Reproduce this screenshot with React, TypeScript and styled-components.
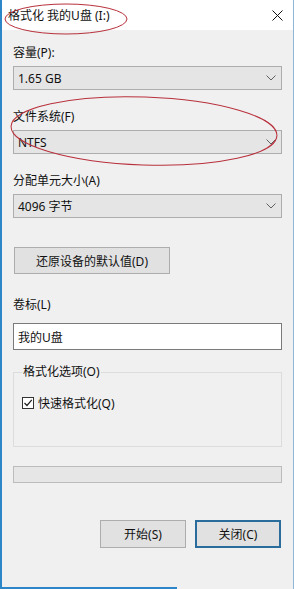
import React from 'react';
import styled, {createGlobalStyle} from 'styled-components';

const GlobalStyle = createGlobalStyle`
  html, body {
    margin: 0;
    padding: 0;
    background: #f0f0f0;
  }
  * {
    box-sizing: border-box;
  }
`;

const FONT = `"Noto Sans", "Noto Sans CJK SC", sans-serif`;

const Window = styled.div`
  position: relative;
  width: 294px;
  height: 589px;
  background: #f0f0f0;
  border-left: 2px solid #2d86c8;
  border-right: 1px solid #8fb6d6;
  font-family: ${FONT};
  font-size: 12px;
  color: #111;
  overflow: hidden;

  &::after {
    content: '';
    position: absolute;
    left: 0;
    bottom: 0;
    width: 175px;
    height: 2px;
    background: #2d86c8;
  }
`;

const TitleBar = styled.div`
  height: 30px;
  background: #fff;
  display: flex;
  align-items: center;
  justify-content: space-between;
  padding: 0 10px 0 6px;
  font-size: 12px;
`;

const Body = styled.div`
  padding: 15px 11px 0 11px;
  display: flex;
  flex-direction: column;
`;

const Field = styled.div<{$gap?: number; $inner?: number}>`
  display: flex;
  flex-direction: column;
  gap: ${({$inner}) => $inner ?? 5}px;
  margin-bottom: ${({$gap}) => $gap ?? 19}px;
`;

const Label = styled.div`
  height: 16px;
  line-height: 16px;
`;

const Combo = styled.div`
  height: 24px;
  background: #e5e5e5;
  border: 1px solid #adadad;
  display: flex;
  align-items: center;
  justify-content: space-between;
  padding: 0 5px 0 4px;
`;

const TextBox = styled.div`
  height: 27px;
  background: #fff;
  border: 1px solid #7a7a7a;
  display: flex;
  align-items: center;
  padding: 0 4px;
`;

const Button = styled.div<{$default?: boolean; $width: number; $height?: number}>`
  width: ${({$width}) => $width}px;
  height: ${({$height}) => $height ?? 28}px;
  background: #e1e1e1;
  border: ${({$default}) => ($default ? '2px solid #2a6c9c' : '1px solid #adadad')};
  display: flex;
  align-items: center;
  justify-content: center;
`;

const ResetRow = styled.div`
  padding-left: 1px;
  margin-bottom: 23px;
`;

const Group = styled.fieldset`
  margin: 0 0 19px 0;
  padding: 15px 8px 0 8px;
  height: 82px;
  border: 1px solid #dcdcdc;
  font-family: ${FONT};
  font-size: 12px;
  legend {
    padding: 0 1px;
    margin-left: 0;
    line-height: 14px;
  }
`;

const CheckRow = styled.label`
  display: flex;
  align-items: center;
  gap: 4px;
`;

const CheckBox = styled.span`
  width: 12px;
  height: 12px;
  border: 1px solid #333;
  background: #fff;
  display: flex;
  align-items: center;
  justify-content: center;
`;

const Progress = styled.div`
  height: 17px;
  background: #e6e6e6;
  border: 1px solid #bcbcbc;
  margin-bottom: 37px;
`;

const Footer = styled.div`
  display: flex;
  justify-content: flex-end;
  gap: 9px;
  padding-right: 1px;
`;

const Annotations = styled.svg`
  position: absolute;
  left: -2px;
  top: 0;
  pointer-events: none;
`;

const Chevron = () => (
  <svg width="10" height="6" viewBox="0 0 10 6">
    <path d="M0.5 0.5 L5 5 L9.5 0.5" fill="none" stroke="#606060" strokeWidth="1" />
  </svg>
);

const CloseIcon = () => (
  <svg width="11" height="11" viewBox="0 0 11 11">
    <path d="M0.5 0.5 L10.5 10.5 M10.5 0.5 L0.5 10.5" stroke="#111" strokeWidth="1" />
  </svg>
);

const CheckMark = () => (
  <svg width="10" height="10" viewBox="0 0 10 10">
    <path d="M1.5 5 L4 7.5 L8.8 1.8" fill="none" stroke="#222" strokeWidth="1.2" />
  </svg>
);

export default function App() {
  return (
    <>
      <GlobalStyle />
      <Window>
        <TitleBar>
          <span>格式化 我的U盘 (I:)</span>
          <CloseIcon />
        </TitleBar>
        <Body>
          <Field>
            <Label>容量(P):</Label>
            <Combo>
              <span>1.65 GB</span>
              <Chevron />
            </Combo>
          </Field>
          <Field>
            <Label>文件系统(F)</Label>
            <Combo>
              <span>NTFS</span>
              <Chevron />
            </Combo>
          </Field>
          <Field $gap={29}>
            <Label>分配单元大小(A)</Label>
            <Combo>
              <span>4096 字节</span>
              <Chevron />
            </Combo>
          </Field>
          <ResetRow>
            <Button $width={156} $height={27}>还原设备的默认值(D)</Button>
          </ResetRow>
          <Field $gap={15} $inner={10}>
            <Label>卷标(L)</Label>
            <TextBox>我的U盘</TextBox>
          </Field>
          <Group>
            <legend>格式化选项(O)</legend>
            <CheckRow>
              <CheckBox>
                <CheckMark />
              </CheckBox>
              快速格式化(Q)
            </CheckRow>
          </Group>
          <Progress />
          <Footer>
            <Button $width={86}>开始(S)</Button>
            <Button $width={86} $default>关闭(C)</Button>
          </Footer>
        </Body>
        <Annotations width="294" height="589" viewBox="0 0 294 589">
          <ellipse cx="66" cy="19" rx="61" ry="15" fill="none" stroke="#b8303c" strokeWidth="1" />
          <ellipse
            cx="144"
            cy="131"
            rx="133"
            ry="34"
            fill="none"
            stroke="#b8303c"
            strokeWidth="1"
            transform="rotate(2 144 131)"
          />
        </Annotations>
      </Window>
    </>
  );
}
